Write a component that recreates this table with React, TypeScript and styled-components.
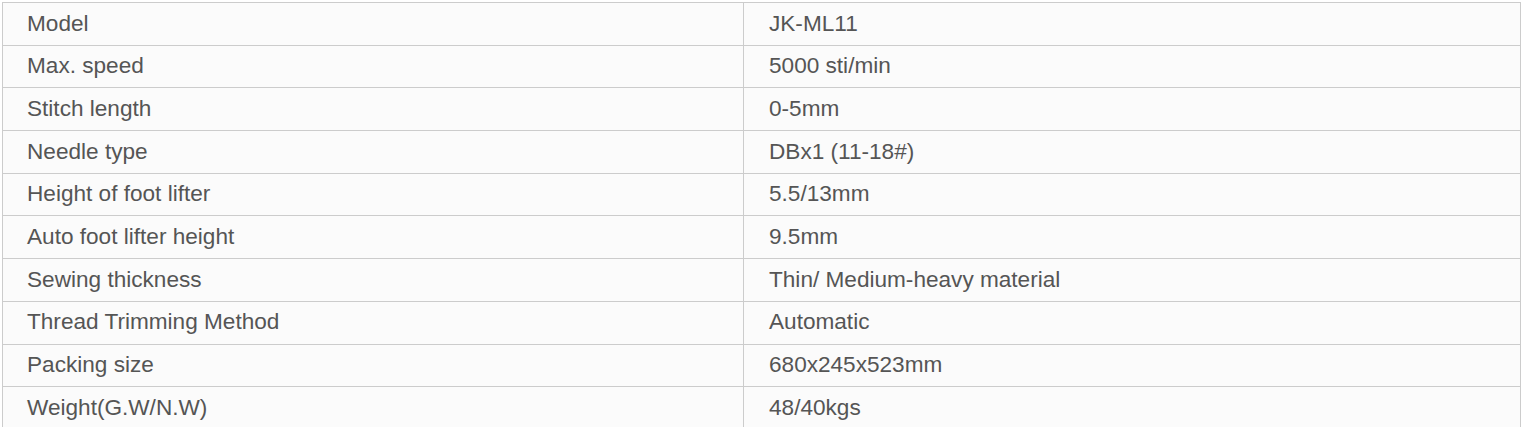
import styled, { createGlobalStyle } from 'styled-components';

const specs: [string, string][] = [
    ['Model', 'JK-ML11'],
    ['Max. speed', '5000 sti/min'],
    ['Stitch length', '0-5mm'],
    ['Needle type', 'DBx1 (11-18#)'],
    ['Height of foot lifter', '5.5/13mm'],
    ['Auto foot lifter height', '9.5mm'],
    ['Sewing thickness', 'Thin/ Medium-heavy material'],
    ['Thread Trimming Method', 'Automatic'],
    ['Packing size', '680x245x523mm'],
    ['Weight(G.W/N.W)', '48/40kgs'],
];

const GlobalStyle = createGlobalStyle`
    body {
        margin: 0;
        padding: 2px;
        background: #ffffff;
        font-family: 'Liberation Sans', Arial, sans-serif;
    }
`;

const SpecTable = styled.table`
    width: 1519px;
    border-collapse: collapse;
    background-color: #fbfbfb;
    color: #555555;
    font-size: 22.6px;
`;

const Cell = styled.td<{ $first?: boolean }>`
    border: 1px solid #cccccc;
    height: 41.7px;
    padding: 0 0 0 ${({ $first }) => ($first ? '24px' : '25px')};
    width: ${({ $first }) => ($first ? '716px' : 'auto')};
    vertical-align: middle;
    line-height: 1;
`;

const App = () => {
    return (
        <>
            <GlobalStyle />
            <SpecTable>
                <tbody>
                    {specs.map(([label, value]) => (
                        <tr key={label}>
                            <Cell $first>{label}</Cell>
                            <Cell>{value}</Cell>
                        </tr>
                    ))}
                </tbody>
            </SpecTable>
        </>
    );
};

export default App;
